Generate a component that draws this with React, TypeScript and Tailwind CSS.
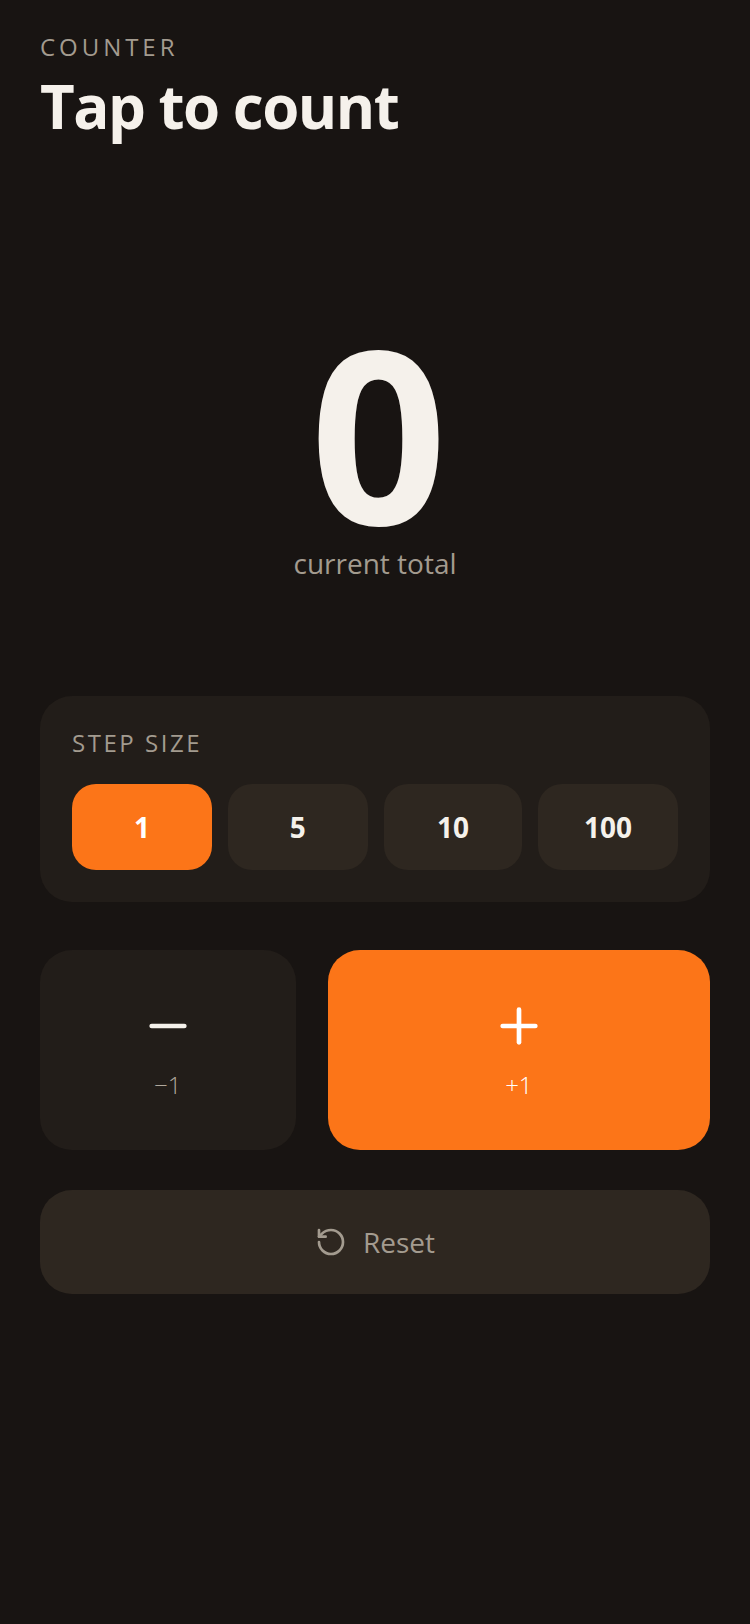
import { useState } from "react";
import { Minus, Plus, RotateCcw } from "lucide-react";

const steps = [1, 5, 10, 100];

export default function App() {
    const [count, setCount] = useState(0)
    const [step, setStep] = useState(1)

    return (
        <div className="min-h-[1624px] bg-[#181412] px-10 pt-[32px] font-['Open_Sans',sans-serif] text-[#f5f1eb]">
            <div className="text-[24px] leading-[30px] tracking-[0.165em] text-[#a39b8f]">COUNTER</div>
            <h1 className="mt-[6px] text-[60px] leading-[76px] font-bold tracking-[-0.025em]">Tap to count</h1>

            <div className="mt-[188px] flex flex-col items-center">
                <div className="text-[240px] leading-[200px] font-bold tracking-[-0.03em]">{count}</div>
                <div className="mt-[12px] text-[28px] leading-[38px] text-[#a39b8f]">current total</div>
            </div>

            <div className="mt-[114px] rounded-[32px] bg-[#221d19] p-8">
                <div className="text-[24px] leading-[30px] tracking-[0.105em] text-[#a39b8f]">STEP SIZE</div>
                <div className="mt-[26px] grid grid-cols-[139.8px_139.8px_138.6px_139.8px] gap-4">
                    {steps.map((s) => (
                        <button
                            key={s}
                            onClick={() => setStep(s)}
                            className={s === step
                                ? "h-[86px] rounded-[24px] bg-[#fc7518] text-[28px] font-bold text-white"
                                : "h-[86px] rounded-[24px] bg-[#2e2720] text-[28px] font-bold text-[#f5f1eb]"}
                        >
                            {s}
                        </button>
                    ))}
                </div>
            </div>

            <div className="mt-[48px] grid grid-cols-[255.7px_1fr] gap-8">
                <button
                    onClick={() => setCount(count - step)}
                    className="flex h-[200px] flex-col items-center justify-center gap-[13px] rounded-[32px] bg-[#221d19]"
                >
                    <Minus size={56} strokeWidth={2} color="#f5f1eb" />
                    <span className="text-[24px] font-light text-[#b0a89c]">−{step}</span>
                </button>
                <button
                    onClick={() => setCount(count + step)}
                    className="flex h-[200px] flex-col items-center justify-center gap-[13px] rounded-[32px] bg-[#fc7518] text-white"
                >
                    <Plus size={56} strokeWidth={2} color="#ffffff" />
                    <span className="text-[24px] font-light">+{step}</span>
                </button>
            </div>

            <button
                onClick={() => setCount(0)}
                className="mt-[40px] flex h-[104px] w-full items-center justify-center gap-4 rounded-[32px] bg-[#2e2720] text-[28px] leading-[36px] text-[#a39b8f]"
            >
                <RotateCcw size={32} strokeWidth={2} />
                Reset
            </button>
        </div>
    )
}
